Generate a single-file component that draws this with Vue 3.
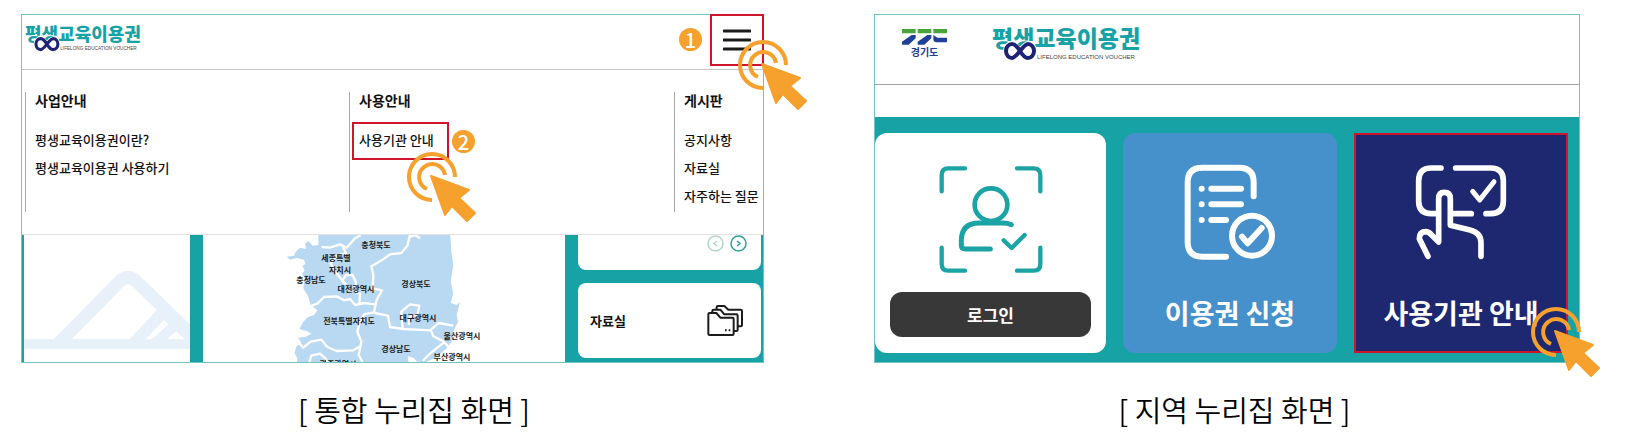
<template>
  <main class="guide">
    <!-- 공용 심볼 -->
    <svg class="defs" width="0" height="0" aria-hidden="true">
      <symbol id="cursor" viewBox="-26 -26 74 74">
        <path d="M23 0A23 23 0 1 0 0 23" fill="none" stroke="#f6a02d" stroke-width="4" />
        <path d="M13 -2A13 13 0 1 0 -5 12" fill="none" stroke="#f6a02d" stroke-width="4" />
        <path
          d="M-1 -1L37 13L27 21L43 36L35 44L20 29L13 38Z"
          fill="#f6a02d"
          stroke="#f6a02d"
          stroke-width="2"
          stroke-linejoin="round"
        />
      </symbol>
      <symbol id="voucher" viewBox="0 0 152 42">
        <text class="logo-ko" x="0" y="28">평생교육이용권</text>
        <path
          d="M28 32C24 27 22 25 20 25a6 7 0 0 0 0 14C24 39 32 25 36 25a6 7 0 0 1 0 14C34 39 31 36 28 32Z"
          fill="#fff"
          stroke="#fff"
          stroke-width="6"
        />
        <path
          d="M28 32C25 27 23 25 20 25a6 7 0 0 0 0 14C25 39 31 25 36 25a6 7 0 0 1 0 14C33 39 31 37 28 32Z"
          fill="none"
          stroke="#1f2373"
          stroke-width="4"
        />
        <text class="logo-en" x="45" y="40">LIFELONG EDUCATION VOUCHER</text>
      </symbol>
    </svg>

    <figure class="shot main-shot">
      <div class="frame">
        <header class="top">
          <a href="#" class="logo" aria-label="평생교육이용권">
            <svg width="119" height="33"><use href="#voucher" /></svg>
          </a>
          <span class="num">1</span>
          <button class="burger" type="button" aria-label="메뉴">
            <svg width="28" height="22" viewBox="0 0 28 22">
              <path d="M1 2H27M1 11H27M1 20H27" stroke="#1b1b1b" stroke-width="3" stroke-linecap="round" />
            </svg>
            <svg class="cursor corner"><use href="#cursor" /></svg>
          </button>
        </header>

        <nav class="menu">
          <section v-for="group in menu" :key="group.title" class="group">
            <h2>{{ group.title }}</h2>
            <ul>
              <li v-for="item in group.items" :key="item">
                <a href="#" :class="{ picked: item === picked }">
                  {{ item }}
                  <template v-if="item === picked">
                    <span class="num">2</span>
                    <svg class="cursor"><use href="#cursor" /></svg>
                  </template>
                </a>
              </li>
            </ul>
          </section>
        </nav>

        <div class="board">
          <div class="panel">
            <svg class="fill" viewBox="0 0 166 127" preserveAspectRatio="xMidYMid slice">
              <g fill="none" stroke="#e8f1fa">
                <path d="M0 109H166" stroke-width="10" />
                <path d="M35 108L96 46Q104 39 112 46L172 104" stroke-width="13" />
                <path d="M110 108L142 74" stroke-width="12" />
                <path d="M131 108L156 86" stroke-width="10" />
                <path d="M140 76L172 106" stroke-width="13" />
              </g>
            </svg>
          </div>

          <div class="panel">
            <svg class="fill" viewBox="203 235 362 127" preserveAspectRatio="xMidYMid slice">
              <g transform="translate(240 225) scale(.3333)">
                <path
                  d="M235 20V60L218 62L205 48L195 56L198 72L180 68L167 80L162 92L140 95L150 104L170 99L192 104L196 116L187 124L194 136L186 148L194 160L190 190L205 215L212 240L232 256L222 270L204 276L190 290L178 312L200 318L214 326L196 336L174 338L184 352L168 366L164 385L172 400L170 420H506L504 394L520 398L532 410L556 412L590 396L618 372L634 352L640 318L654 290L650 268L660 232L650 240L632 234L640 205L632 170L640 120L634 80L630 20Z"
                  fill="#b9d8f1"
                />
                <g fill="none" stroke="#fff" stroke-width="7" stroke-linejoin="round">
                  <path d="M245 66L270 68L300 58L320 68L345 40L362 30" />
                  <path d="M308 64L318 84L290 92L272 116L286 140L302 160L318 178" />
                  <path d="M510 30L502 62L484 84L450 88L425 106L394 124L400 150L398 190L426 196L410 225L402 262L372 268L358 296L352 320L364 350L356 390L368 412" />
                  <path d="M510 36L525 30L540 40" />
                  <path d="M212 243L232 236L252 216L290 214L312 226L330 222L346 240L372 234L404 238" />
                  <path d="M318 180L306 168L318 150L338 150L348 172L344 200L360 206L358 235" />
                  <path d="M404 264L444 272L450 306L490 312L570 316L596 294L640 302" />
                  <path d="M488 310L484 260L510 238L538 242L532 270L510 276L506 300" />
                  <path d="M572 314L580 334L612 350L626 366M612 352L570 386L548 408" />
                  <path d="M174 350L190 368L212 350L244 344L262 366L290 378L340 376L360 364" />
                  <path d="M208 412L214 392L240 386L256 400L264 412" />
                </g>
              </g>
              <text v-for="r in regions" :key="r.name" class="region" :x="r.x" :y="r.y">{{ r.name }}</text>
            </svg>
          </div>

          <div class="side">
            <div class="card pager">
              <button type="button" class="prev" aria-label="이전">
                <svg width="17" height="17" viewBox="0 0 17 17">
                  <circle cx="8.5" cy="8.5" r="7.5" />
                  <path d="M10 6L7 8.5L10 11" />
                </svg>
              </button>
              <button type="button" aria-label="다음">
                <svg width="17" height="17" viewBox="0 0 17 17">
                  <circle cx="8.5" cy="8.5" r="7.5" />
                  <path d="M7 6L10 8.5L7 11" />
                </svg>
              </button>
            </div>
            <a href="#" class="card archive">
              자료실
              <svg width="36" height="31" viewBox="0 0 108 93" fill="none" stroke="#1b1b1b" stroke-width="6" stroke-linejoin="round">
                <path d="M4 28Q4 24 8 24H28L40 38H76Q80 38 80 42V86Q80 90 76 90H8Q4 90 4 86Z" />
                <path d="M16 24V18Q16 14 20 14H40L52 28H88Q92 28 92 32V74Q92 78 88 78H81" />
                <path d="M29 13V7Q29 3 33 3H52L64 14H101Q105 14 105 18V60Q105 64 101 64H93" />
                <path d="M54 76H59M65 76H70" />
              </svg>
            </a>
          </div>
        </div>
      </div>
      <figcaption>[ 통합 누리집 화면 ]</figcaption>
    </figure>

    <figure class="shot local-shot">
      <div class="frame">
        <header class="top local">
          <a href="#" class="province">
            <svg width="45" height="16" viewBox="0 0 135 48">
              <path d="M0 0H41V13H0ZM47 0H88V13H47ZM94 0H135V13H94Z" fill="#4ba33b" />
              <path d="M41 18V28L20 47H0V38L29 18ZM88 18V28L67 47H47V38L76 18ZM94 18L106 26H135V40H104Q94 40 94 30Z" fill="#20409a" />
            </svg>
            경기도
          </a>
          <a href="#" class="logo" aria-label="평생교육이용권">
            <svg width="152" height="42"><use href="#voucher" /></svg>
          </a>
        </header>

        <div class="tiles">
          <div class="tile login">
            <svg width="104" height="109" viewBox="235 135 312 327" fill="none" stroke="#1ca3a6" stroke-width="13" stroke-linecap="round" stroke-linejoin="round">
              <path d="M243 214V165Q243 145 263 145H313M469 145H519Q539 145 539 165V214M243 383V432Q243 452 263 452H313M469 452H519Q539 452 539 432V383" />
              <circle cx="391" cy="254" r="49" stroke-width="14" />
              <path d="M452 314Q442 309 425 309H356Q302 309 302 362V375Q302 387 314 387H389" stroke-width="15" />
              <path d="M429 361L453 384L492 345" />
            </svg>
            <button type="button">로그인</button>
          </div>

          <a href="#" class="tile apply">
            <svg width="92" height="96" viewBox="221 130 276 288" fill="none" stroke="#fff" stroke-width="18" stroke-linecap="round" stroke-linejoin="round">
              <path d="M430 227V185Q430 141 386 141H276Q232 141 232 185V364Q232 408 276 408H347" />
              <path d="M303 204H392M303 251H392M303 298H347M274 204h.1M274 251h.1M274 298h.1" />
              <circle cx="425" cy="345" r="60" />
              <path d="M395 348L412 368L454 322" />
            </svg>
            <strong>이용권 신청</strong>
          </a>

          <a href="#" class="tile place">
            <svg width="92" height="96" viewBox="223 130 276 288" fill="none" stroke="#fff" stroke-width="17" stroke-linecap="round" stroke-linejoin="round">
              <path d="M301 142H272Q234 142 234 180V242Q234 279 272 279H292" />
              <path d="M345 142H450Q488 142 488 180V242Q488 279 450 279H436M392 279H334" />
              <path d="M396 212L417 238L460 183" stroke-width="15" />
              <path d="M262 407L236 354Q236 333 256 333Q266 334 273 343L294 364V234Q294 215 311 215Q329 215 329 234V314L388 328Q421 336 421 366V407" />
            </svg>
            <strong>사용기관 안내</strong>
            <svg class="cursor"><use href="#cursor" /></svg>
          </a>
        </div>
      </div>
      <figcaption>[ 지역 누리집 화면 ]</figcaption>
    </figure>
  </main>
</template>

<script setup>
// 강조 표시할 메뉴
const picked = '사용기관 안내'

const menu = [
  { title: '사업안내', items: ['평생교육이용권이란?', '평생교육이용권 사용하기'] },
  { title: '사용안내', items: ['사용기관 안내'] },
  { title: '게시판', items: ['공지사항', '자료실', '자주하는 질문'] }
]

// 지도 위 지역명 좌표
const regions = [
  { name: '충청북도', x: 376, y: 248 },
  { name: '세종특별', x: 336, y: 261 },
  { name: '자치시', x: 340, y: 273 },
  { name: '충청남도', x: 311, y: 283 },
  { name: '대전광역시', x: 356, y: 292 },
  { name: '경상북도', x: 416, y: 287 },
  { name: '전북특별자치도', x: 349, y: 324 },
  { name: '대구광역시', x: 418, y: 321 },
  { name: '울산광역시', x: 462, y: 339 },
  { name: '경상남도', x: 396, y: 352 },
  { name: '부산광역시', x: 452, y: 360 },
  { name: '광주광역시', x: 338, y: 367 }
]
</script>

<style>
body {
  margin: 0;
  background: #fff;
}
</style>

<style scoped>
.guide {
  display: grid;
  grid-template-columns: 786fr 721fr;
  gap: 67px;
  padding: 14px 43px 0 21px;
  font-family: "Noto Sans CJK KR", "Noto Sans", sans-serif;
  color: #111;
}

.defs {
  position: absolute;
}

a {
  color: inherit;
  text-decoration: none;
}

button {
  padding: 0;
  border: 0;
  background: none;
  font-family: inherit;
  cursor: pointer;
}

svg {
  display: block;
}

.shot {
  margin: 0;
  min-width: 0;
}

.frame {
  border: 1px solid #6fc4c5;
}

.main-shot .frame {
  margin-right: 43px;
}

.local-shot .frame {
  margin-right: 15px;
}

figcaption {
  margin-top: 26px;
  font-size: 29px;
  font-weight: 350;
  line-height: 40px;
  text-align: center;
  color: #000;
}

.logo-ko {
  font-size: 23px;
  font-weight: 900;
  fill: #17a3a6;
}

.logo-en {
  font-family: "Liberation Sans", sans-serif;
  font-size: 6px;
  fill: #444;
}

.cursor {
  position: absolute;
  width: 74px;
  height: 74px;
  z-index: 2;
  pointer-events: none;
}

.num {
  display: grid;
  place-items: center;
  width: 23px;
  height: 23px;
  border-radius: 50%;
  background: #f6a02d;
  color: #fff;
  font-size: 20px;
  font-weight: 500;
  line-height: 23px;
}

/* 상단 */
.top {
  display: flex;
  align-items: flex-start;
  height: 54px;
  border-bottom: 1px solid #c4c4c4;
}

.top .logo {
  padding: 4px 0 0 3px;
  margin-right: auto;
}

.top .num {
  margin: 13px 8px 0 0;
}

.burger {
  position: relative;
  display: flex;
  align-items: center;
  justify-content: center;
  width: 54px;
  height: 52px;
  margin: -1px -1px 0 0;
  border: 2px solid #cf142b;
}

.corner {
  right: -49px;
  bottom: -49px;
}

/* 전체 메뉴 */
.menu {
  display: grid;
  grid-template-columns: 324fr 325fr 89fr;
  padding: 22px 0 22px 3px;
  border-bottom: 1px solid #e2e2e2;
}

.group {
  min-height: 120px;
  padding-left: 9px;
  border-left: 1px solid #aaa;
  box-sizing: border-box;
  white-space: nowrap;
}

.group h2 {
  margin: 0 0 18px;
  font-size: 14px;
  line-height: 16px;
}

.group ul {
  margin: 0;
  padding: 0;
  list-style: none;
}

.group li {
  height: 28px;
  font-size: 13px;
  font-weight: 500;
  line-height: 28px;
}

.picked {
  position: relative;
  display: inline-block;
}

.picked::after {
  content: '';
  position: absolute;
  inset: -4px -15px -6px -7px;
  border: 2px solid #cf142b;
}

.picked .num {
  position: absolute;
  left: 93px;
  top: 4px;
}

.picked .cursor {
  left: 47px;
  top: 25px;
}

/* 하단 콘텐츠 */
.board {
  display: grid;
  grid-template-columns: 166fr 362fr 183fr;
  gap: 13px;
  height: 127px;
  padding: 0 2px;
  background: #17a3a6;
}

.panel {
  min-width: 0;
  background: #fff;
  overflow: hidden;
}

.fill {
  width: 100%;
  height: 127px;
}

.region {
  font-size: 8px;
  font-weight: 700;
  text-anchor: middle;
  fill: #1b1b1b;
}

.side {
  display: grid;
  grid-template-rows: 35px 75px;
  gap: 13px;
}

.card {
  border-radius: 8px;
  background: #fff;
}

.pager {
  display: flex;
  justify-content: flex-end;
  align-items: flex-start;
  gap: 6px;
  padding-right: 14px;
  border-radius: 0 0 8px 8px;
}

.pager svg {
  fill: none;
  stroke: #2aa598;
  stroke-width: 1.5;
}

.pager .prev svg {
  stroke: #b5d5cd;
}

.archive {
  display: flex;
  align-items: center;
  justify-content: space-between;
  padding: 0 18px 0 12px;
  font-size: 13px;
  font-weight: 700;
}

/* 지역 누리집 */
.local {
  height: 69px;
  border-bottom-color: #a5a5a5;
}

.province {
  display: flex;
  flex-direction: column;
  align-items: center;
  margin: 14px 42px 0 27px;
  color: #20409a;
  font-size: 10px;
  font-weight: 700;
  line-height: 13px;
}

.tiles {
  display: grid;
  grid-template-columns: 231fr 214fr 214fr;
  gap: 17px;
  margin-top: 32px;
  padding: 16px 11px 9px 0;
  background: #17a3a6;
}

.tile {
  position: relative;
  display: flex;
  flex-direction: column;
  align-items: center;
  height: 220px;
  padding-top: 31px;
  border-radius: 12px;
  box-sizing: border-box;
  color: #fff;
}

.tile strong {
  margin-top: 33px;
  font-size: 27px;
  font-weight: 700;
  line-height: 40px;
}

.login {
  padding: 32px 15px 0;
  background: #fff;
}

.login button {
  width: 100%;
  height: 45px;
  margin-top: 18px;
  border-radius: 12px;
  background: #383838;
  color: #fff;
  font-size: 17px;
  font-weight: 700;
}

.apply {
  background: #4690cb;
}

.place {
  padding-top: 29px;
  border: 2px solid #cf142b;
  border-radius: 0;
  background: #1d2871;
}

.place .cursor {
  right: -38px;
  bottom: -29px;
}
</style>
